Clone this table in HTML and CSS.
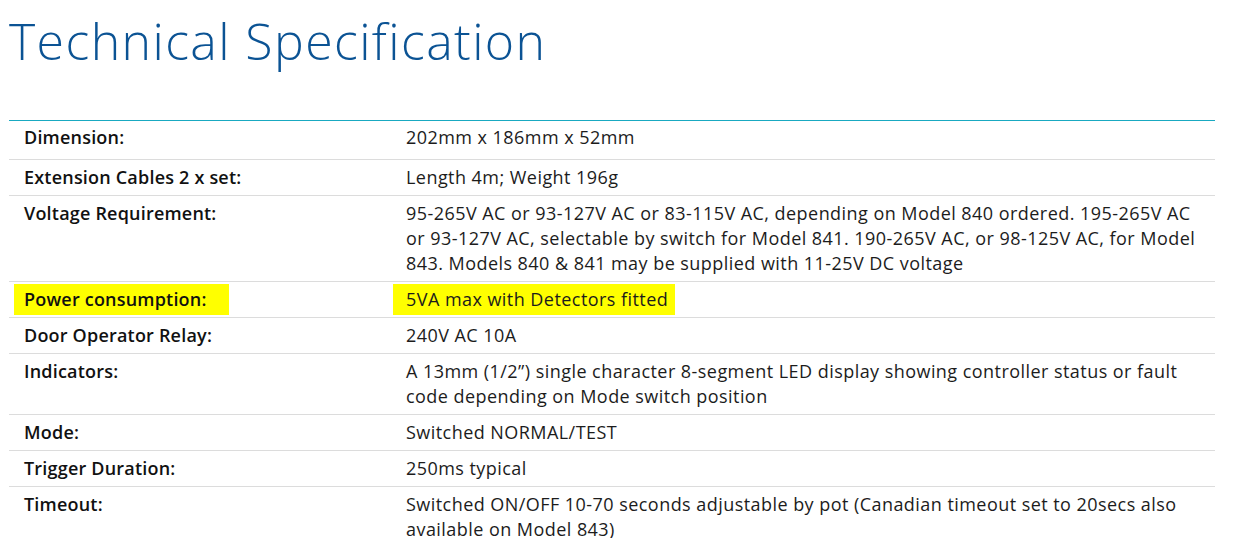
FILE: index.html
```html
<!DOCTYPE html>
<html lang="en">
<head>
<meta charset="utf-8">
<title>Technical Specification</title>
<link rel="stylesheet" href="styles.css">
</head>
<body>
<main class="page">
  <h1 class="title">Technical Specification</h1>
  <table class="spec">
    <tbody>
      <tr class="first">
        <th>Dimension:</th>
        <td>202mm x 186mm x 52mm</td>
      </tr>
      <tr>
        <th>Extension Cables 2 x set:</th>
        <td>Length 4m; Weight 196g</td>
      </tr>
      <tr>
        <th>Voltage Requirement:</th>
        <td><span class="nb">95-265V</span> AC or <span class="nb">93-127V</span> AC or <span class="nb">83-115V</span> AC, depending on Model 840 ordered. <span class="nb">195-265V</span> AC or <span class="nb">93-127V</span> AC, selectable by switch for Model 841. <span class="nb">190-265V</span> AC, or <span class="nb">98-125V</span> AC, for Model 843. Models 840 &amp; 841 may be supplied with <span class="nb">11-25V</span> DC voltage</td>
      </tr>
      <tr>
        <th><span class="hl hl-label">Power consumption:</span></th>
        <td><span class="hl hl-value">5VA max with Detectors fitted</span></td>
      </tr>
      <tr>
        <th>Door Operator Relay:</th>
        <td>240V AC 10A</td>
      </tr>
      <tr>
        <th>Indicators:</th>
        <td>A 13mm (1/2”) single character <span class="nb">8-segment</span> LED display showing controller status or fault code depending on Mode switch position</td>
      </tr>
      <tr>
        <th>Mode:</th>
        <td>Switched NORMAL/TEST</td>
      </tr>
      <tr>
        <th>Trigger Duration:</th>
        <td>250ms typical</td>
      </tr>
      <tr>
        <th>Timeout:</th>
        <td>Switched ON/OFF <span class="nb">10-70</span> seconds adjustable by pot (Canadian timeout set to 20secs also available on Model 843)</td>
      </tr>
    </tbody>
  </table>
</main>
</body>
</html>
```

FILE: styles.css
```css
* { box-sizing: border-box; }

html, body {
  margin: 0;
  padding: 0;
  background: #ffffff;
}

body {
  font-family: "Open Sans", "Liberation Sans", sans-serif;
  color: #111111;
}

.page {
  padding: 11px 0 0 9px;
  width: 1250px;
}

.title {
  margin: 0 0 49px 0;
  font-family: "Open Sans", "Liberation Sans", sans-serif;
  font-weight: 300;
  font-size: 50px;
  line-height: 60px;
  color: #0b5394;
  letter-spacing: 1.4px;
}

.spec {
  width: 1206px;
  border-collapse: collapse;
  border-top: 1px solid #19a9c1;
  font-size: 18px;
  line-height: 25px;
}

.spec th,
.spec td {
  vertical-align: top;
  text-align: left;
  padding: 5px 0 5px 0;
  border-bottom: 1px solid #dcdcdc;
}

.spec th {
  width: 397px;
  padding-left: 15px;
  font-weight: 600;
  color: #111111;
  letter-spacing: 0.2px;
}

.spec td {
  font-weight: 400;
  color: #1c1c1c;
  padding-right: 10px;
  letter-spacing: 0.45px;
}

.nb {
  white-space: nowrap;
}

.spec tr.first th,
.spec tr.first td {
  padding-top: 4px;
  padding-bottom: 9px;
}

.spec tr:last-child th,
.spec tr:last-child td {
  border-bottom: none;
}

.hl {
  display: inline-block;
  background: #ffff00;
  padding-top: 3px;
  padding-bottom: 3px;
  margin-top: -3px;
  margin-bottom: -3px;
}

.hl-label {
  padding-left: 10px;
  padding-right: 22px;
  margin-left: -10px;
}

.hl-value {
  padding-left: 13px;
  padding-right: 7px;
  margin-left: -13px;
}
```
